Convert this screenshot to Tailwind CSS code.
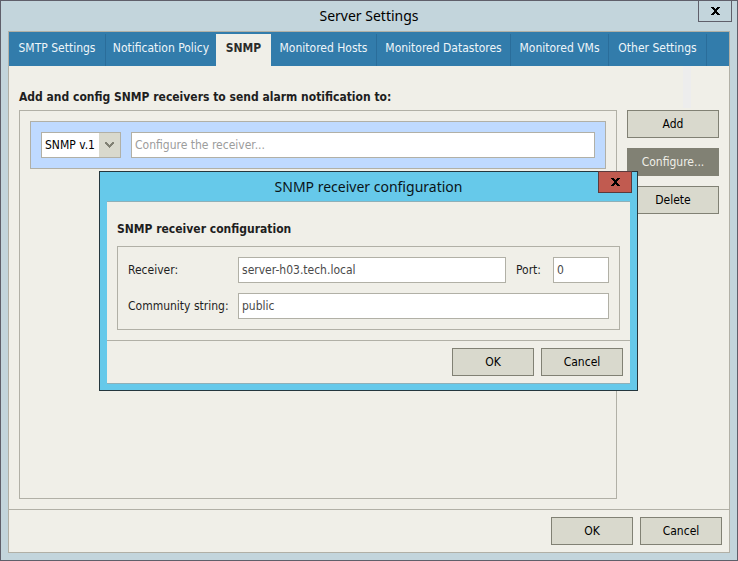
<!DOCTYPE html>
<html lang="en">
  <head>
    <meta charset="UTF-8" />
    <meta name="viewport" content="width=device-width, initial-scale=1.0" />
    <title>Server Settings</title>
    <script src="https://cdn.jsdelivr.net/npm/@tailwindcss/browser@4"></script>
  </head>
  <body class="font-['DejaVu_Sans_Condensed','DejaVu_Sans',sans-serif] text-[12px] text-[#1e1e1e]">
    <div class="relative flex min-h-screen flex-col border border-[#5f5f6a] bg-[#c3d5dc] px-[7px] pb-[7px]">
      <!-- Title bar -->
      <header class="flex h-[30px] items-center justify-center">
        <h1 class="font-['Noto_Sans',sans-serif] text-[14px] leading-[18px] text-black">Server Settings</h1>
        <button type="button" aria-label="Close" class="absolute -top-px right-[5px] flex h-[22px] w-[34px] items-center justify-center border border-[#5f5f6a]">
          <svg class="h-[8px] w-[9px]" viewBox="0 0 9 8" fill="#000" shape-rendering="crispEdges">
            <path d="M0 0h3v1h1v1h1v-1h1v-1h3v1h-1v1h-1v1h-1v2h1v1h1v1h1v1h-3v-1h-1v-1h-1v1h-1v1h-3v-1h1v-1h1v-1h1v-2h-1v-1h-1v-1h-1z" />
          </svg>
        </button>
      </header>

      <main class="relative flex flex-grow flex-col border border-[#b1b0a6] bg-[#f0efe8]">
        <nav class="grid h-[34px] grid-cols-[97px_110px_55px_106px_134px_98px_98px] bg-[#327cab] pt-[2px] text-[#eef5f9]">
          <a href="#" class="flex items-center justify-center border-r border-[#2a6d9a] pb-1">SMTP Settings</a>
          <a href="#" class="flex items-center justify-center pb-1">Notification Policy</a>
          <a href="#" class="flex items-center justify-center bg-[#f0efe8] pb-1 font-bold text-[#2b2b2b]">SNMP</a>
          <a href="#" class="flex items-center justify-center border-r border-[#2a6d9a] pb-1">Monitored Hosts</a>
          <a href="#" class="flex items-center justify-center border-r border-[#2a6d9a] pb-1">Monitored Datastores</a>
          <a href="#" class="flex items-center justify-center border-r border-[#2a6d9a] pb-1">Monitored VMs</a>
          <a href="#" class="flex items-center justify-center border-r border-[#2a6d9a] pb-1">Other Settings</a>
        </nav>
        <div class="absolute top-[34px] right-[38px] h-[42px] w-[8px] bg-[#ededed]"></div>

        <section class="flex flex-grow flex-col px-[10px] pt-[22px] pb-[10px]">
          <h2 class="mb-[4px] leading-[18px] font-bold">Add and config SNMP receivers to send alarm notification to:</h2>
          <div class="flex flex-grow gap-[10px]">
            <div class="flex-grow border border-[#b1b0a6] p-[10px]">
              <div class="flex gap-[10px] border border-[#b1b0a6] bg-[#bfdaff] p-[10px]">
                <div class="relative h-[26px] w-[80px]">
                  <select aria-label="SNMP version" class="h-full w-full appearance-none border border-[#b1b0a6] bg-white pl-[3px] text-black">
                    <option>SNMP v.1</option>
                  </select>
                  <span class="pointer-events-none absolute top-px right-px bottom-px flex w-[21px] items-center justify-center bg-[#d9d9cd]">
                    <svg class="h-[6px] w-[9px]" viewBox="0 0 9 6" fill="#818174" shape-rendering="crispEdges">
                      <path d="M0 0h2v1h1v1h1v1h1v-1h1v-1h1v-1h2v2h-1v1h-1v1h-1v1h-1v1h-1v-1h-1v-1h-1v-1h-1v-1h-1z" />
                    </svg>
                  </span>
                </div>
                <input type="text" aria-label="Receiver" placeholder="Configure the receiver..." class="h-[26px] min-w-0 flex-grow border border-[#b1b0a6] bg-white px-[3px] placeholder:text-[#9c9c9c]" />
              </div>
            </div>
            <div class="flex w-[92px] flex-col gap-[10px]">
              <button type="button" class="h-[28px] border border-[#818174] bg-[#d9d9cd] text-black">Add</button>
              <button type="button" class="h-[28px] border border-[#818174] bg-[#818174] text-[#f0efe8]">Configure...</button>
              <button type="button" class="h-[28px] border border-[#818174] bg-[#d9d9cd] text-black">Delete</button>
            </div>
          </div>
        </section>

        <footer class="flex justify-end gap-[7px] border-t border-[#b1b0a6] p-[7px]">
          <button type="button" class="h-[28px] w-[82px] border border-[#818174] bg-[#d9d9cd] text-black">OK</button>
          <button type="button" class="h-[28px] w-[82px] border border-[#818174] bg-[#d9d9cd] text-black">Cancel</button>
        </footer>
      </main>
    </div>

    <!-- Receiver dialog -->
    <div class="absolute inset-0 flex items-center justify-center pt-px pr-px">
      <form role="dialog" aria-labelledby="dialog-title" class="relative w-[539px] border border-[#25363d] bg-[#66c9ea] px-[7px] pb-[6px]">
        <div class="flex h-[29px] items-center justify-center">
          <h2 id="dialog-title" class="font-['Noto_Sans',sans-serif] text-[14px] leading-[18px] text-[#0a1418]">SNMP receiver configuration</h2>
          <button type="button" aria-label="Close" class="absolute -top-px right-[5px] flex h-[22px] w-[34px] items-center justify-center border border-[#5b3a3c] bg-[#c15b50]">
            <svg class="h-[8px] w-[9px]" viewBox="0 0 9 8" fill="#000" shape-rendering="crispEdges">
              <path d="M0 0h3v1h1v1h1v-1h1v-1h3v1h-1v1h-1v1h-1v2h1v1h1v1h1v1h-3v-1h-1v-1h-1v1h-1v1h-3v-1h1v-1h1v-1h1v-2h-1v-1h-1v-1h-1z" />
            </svg>
          </button>
        </div>
        <div class="border-y border-[#8fb0b8] bg-[#f0efe8]">
          <div class="px-[10px] pt-[18px] pb-[10px]">
            <h3 class="mb-[8px] leading-[18px] font-bold">SNMP receiver configuration</h3>
            <div class="grid grid-cols-[100px_1fr] items-center gap-[10px] border border-[#b1b0a6] p-[10px]">
              <label for="receiver">Receiver:</label>
              <div class="flex items-center gap-[10px]">
                <input id="receiver" type="text" value="server-h03.tech.local" class="h-[26px] min-w-0 flex-grow border border-[#b1b0a6] bg-white px-[3px] text-[#4a4a4a]" />
                <label for="port" class="w-[27px]">Port:</label>
                <input id="port" type="text" value="0" class="h-[26px] w-[56px] border border-[#b1b0a6] bg-white px-[3px] text-[#4a4a4a]" />
              </div>
              <label for="community" class="whitespace-nowrap">Community string:</label>
              <input id="community" type="text" value="public" class="h-[26px] min-w-0 border border-[#b1b0a6] bg-white px-[3px] text-[#4a4a4a]" />
            </div>
          </div>
          <div class="flex justify-end gap-[7px] border-t border-[#b1b0a6] p-[7px]">
            <button type="button" class="h-[28px] w-[82px] border border-[#818174] bg-[#d9d9cd] text-black">OK</button>
            <button type="button" class="h-[28px] w-[82px] border border-[#818174] bg-[#d9d9cd] text-black">Cancel</button>
          </div>
        </div>
      </form>
    </div>
  </body>
</html>
